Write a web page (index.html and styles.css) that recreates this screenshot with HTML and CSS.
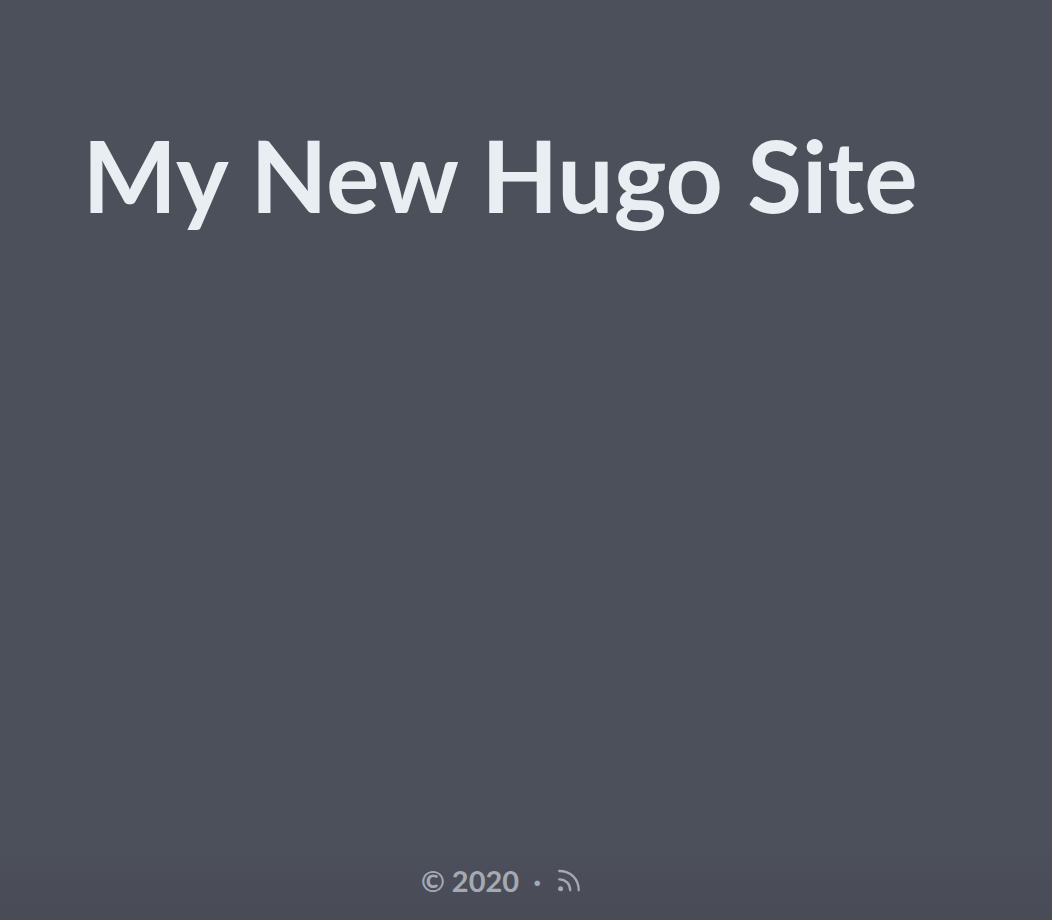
FILE: index.html
```html
<!DOCTYPE html>
<html lang="en">
<head>
<meta charset="utf-8">
<meta name="viewport" content="width=device-width, initial-scale=1">
<title>My New Hugo Site</title>
<link rel="stylesheet" href="styles.css">
</head>
<body>
<main class="hero">
<h1 class="title">My New Hugo Site</h1>
</main>
<footer class="footer">
<span>© 2020</span>
<span>·</span>
<a class="feed" href="#" aria-label="RSS feed">
<svg viewBox="0 0 24 24" width="24" height="24" fill="none" stroke="currentColor" stroke-width="2.300" stroke-linecap="round"><path d="M2.200 10.300c6.500 0 11 4.500 11 11M2.200 2c11.500 0 19.500 8 19.500 19.300"/><circle cx="3.600" cy="19.700" r="2.500" fill="currentColor" stroke="none"/></svg>
</a>
</footer>
</body>
</html>
```
FILE: styles.css
```css
body {
  margin: 0;
  min-height: 100vh;
  display: flex;
  flex-direction: column;
  background: linear-gradient(#4c505b 92%, #494b57);
  color: #e9eef2;
  font-family: "Trebuchet MS", Lato, sans-serif;
  font-weight: 700;
}

.hero {
  flex: 1;
  padding: 108px 52px 0 0;
}

.title {
  margin: 0;
  font-size: 100px;
  line-height: 132px;
  text-align: center;
}

.footer {
  display: flex;
  align-items: center;
  justify-content: center;
  gap: 14px;
  padding: 0 50px 21px 0;
  color: #a5a9b2;
  font-size: 29px;
  line-height: 36px;
}

.feed {
  display: flex;
  margin-left: 2px;
  color: inherit;
}
```
